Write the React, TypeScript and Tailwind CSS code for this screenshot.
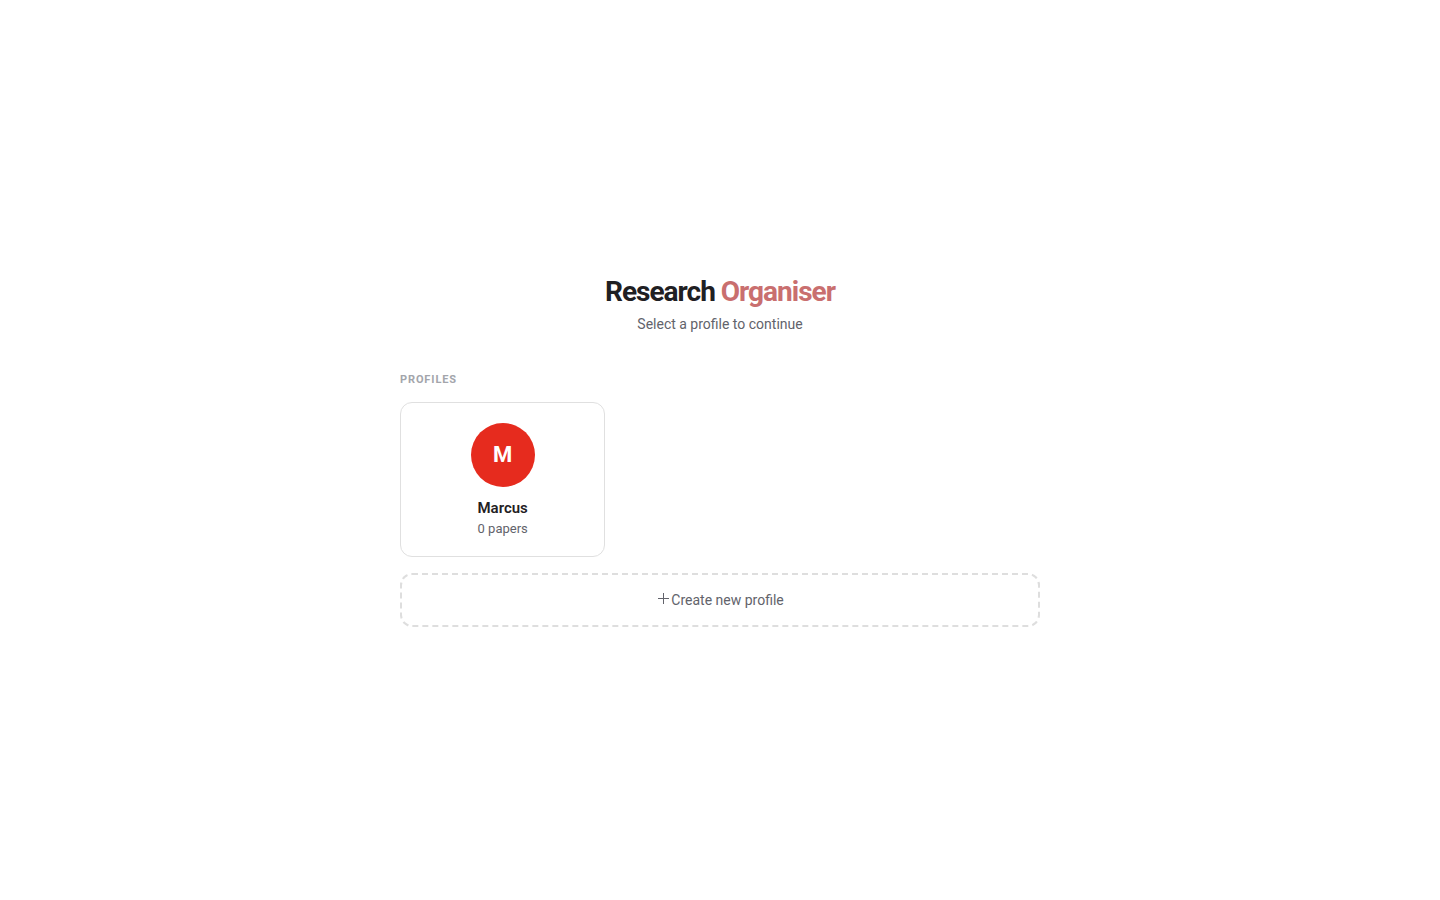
const profiles = [{ name: 'Marcus', papers: 0, initial: 'M' }];

export default function App() {
  return (
    <div className="min-h-screen bg-white pt-[2px] flex items-center justify-center font-['Roboto',sans-serif]">
      <div className="w-[640px]">
        <div className="text-center mb-[36px]">
          <h1 className="text-[28px] leading-[34px] font-bold tracking-[-1px] text-[#1f2023]">
            Research <span className="text-[#c96f6f]">Organiser</span>
          </h1>
          <p className="mt-[3px] text-sm leading-[24px] text-[#62636b]">Select a profile to continue</p>
        </div>

        <div className="text-[11px] leading-[16px] font-bold tracking-[0.88px] text-[#a3a5ab] mb-[14px]">PROFILES</div>

        <div className="grid grid-cols-3 gap-[12px] mb-[16px]">
          {profiles.map((p) => (
            <button key={p.name} className="flex flex-col items-center h-[155px] pt-[20px] rounded-[12px] border border-[#e0e0e0] bg-white">
              <div className="w-16 h-16 pb-[2px] rounded-full bg-[#e62b1e] flex items-center justify-center text-white text-[22px] font-bold">
                {p.initial}
              </div>
              <div className="mt-[12px] text-[15px] leading-[18px] font-semibold text-[#1f2023]">{p.name}</div>
              <div className="mt-[3px] text-[13px] leading-[18px] text-[#62636b]">{p.papers} papers</div>
            </button>
          ))}
        </div>

        <button className="w-full h-[54px] flex items-center justify-center rounded-[12px] border-2 border-dashed border-[#dedede] text-sm text-[#62636b]">
          <svg width="15" height="15" viewBox="0 0 15 15" className="mb-[3px]" fill="none" stroke="currentColor" strokeWidth="1">
            <path d="M7.5 2v11M2 7.5h11" />
          </svg>
          Create new profile
        </button>
      </div>
    </div>
  );
}
